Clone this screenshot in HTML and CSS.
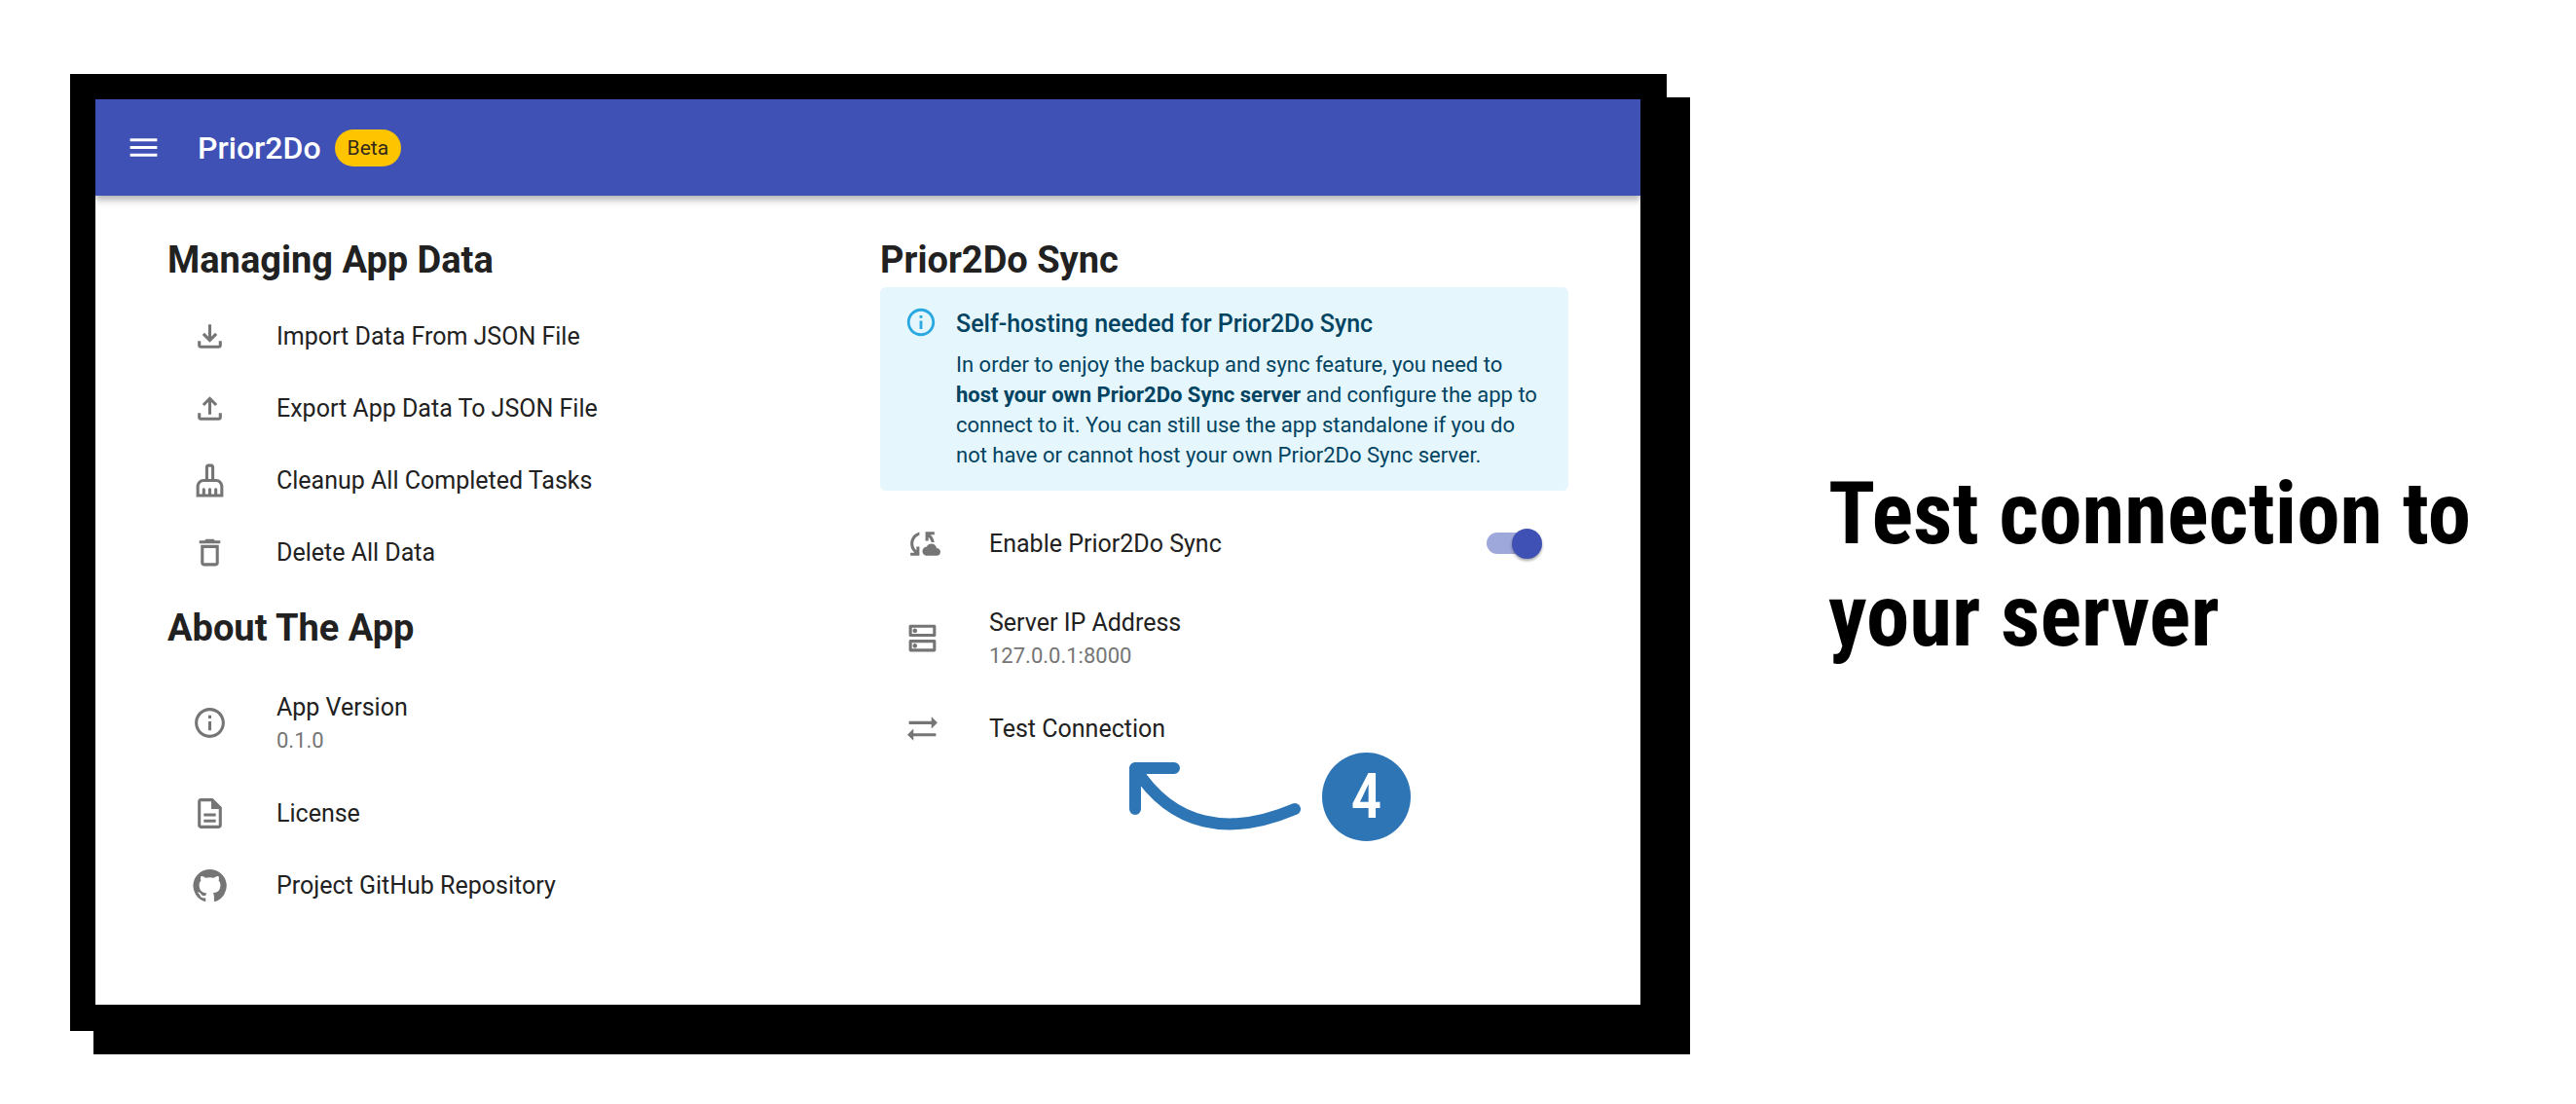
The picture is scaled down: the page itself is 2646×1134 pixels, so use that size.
FILE: index.html
```html
<!DOCTYPE html>
<html lang="en">
<head>
<meta charset="utf-8">
<meta name="viewport" content="width=device-width, initial-scale=1">
<title>Prior2Do – Test connection to your server</title>
<link rel="stylesheet" href="styles.css">
</head>
<body>
<main class="slide">
  <section class="window" aria-label="Prior2Do settings">
    <header class="app-bar">
      <button class="menu-button" type="button" aria-label="Open menu">
        <svg class="icon" viewBox="0 0 24 24" aria-hidden="true"><path d="M3 18h18v-2H3v2zm0-5h18v-2H3v2zm0-7v2h18V6H3z"/></svg>
      </button>
      <h1 class="app-title">Prior2Do</h1>
      <span class="badge">Beta</span>
    </header>
    <div class="panels">
      <div class="panel">
        <h2 class="heading">Managing App Data</h2>
        <ul class="list">
          <li><button class="row" type="button">
            <svg class="icon" viewBox="0 0 24 24" aria-hidden="true"><path d="M18 15v3H6v-3H4v3c0 1.100.9 2 2 2h12c1.100 0 2-.9 2-2v-3h-2zm-1-4l-1.410-1.410L13 12.170V4h-2v8.170L8.410 9.590 7 11l5 5 5-5z"/></svg>
            <span class="label">Import Data From JSON File</span>
          </button></li>
          <li><button class="row" type="button">
            <svg class="icon" viewBox="0 0 24 24" aria-hidden="true"><path d="M18 15v3H6v-3H4v3c0 1.100.9 2 2 2h12c1.100 0 2-.9 2-2v-3h-2zM7 9l1.410 1.410L11 7.830V16h2V7.830l2.590 2.580L17 9l-5-5-5 5z"/></svg>
            <span class="label">Export App Data To JSON File</span>
          </button></li>
          <li><button class="row" type="button">
            <svg class="icon" viewBox="0 0 24 24" aria-hidden="true"><path d="M16 11h-1V3c0-1.100-.9-2-2-2h-2c-1.100 0-2 .9-2 2v8H8c-2.760 0-5 2.240-5 5v7h18v-7c0-2.760-2.240-5-5-5zm-5-8h2v8h-2V3zm8 18h-2v-3c0-.55-.45-1-1-1s-1 .45-1 1v3h-2v-3c0-.55-.45-1-1-1s-1 .45-1 1v3H9v-3c0-.55-.45-1-1-1s-1 .45-1 1v3H5v-5c0-1.650 1.350-3 3-3h8c1.650 0 3 1.350 3 3v5z"/></svg>
            <span class="label">Cleanup All Completed Tasks</span>
          </button></li>
          <li><button class="row" type="button">
            <svg class="icon" viewBox="0 0 24 24" aria-hidden="true"><path d="M6 19c0 1.100.9 2 2 2h8c1.100 0 2-.9 2-2V7H6v12zM8 9h8v10H8V9zm7.500-5l-1-1h-5l-1 1H5v2h14V4z"/></svg>
            <span class="label">Delete All Data</span>
          </button></li>
        </ul>
        <h2 class="heading">About The App</h2>
        <ul class="list">
          <li class="row row-double">
            <svg class="icon" viewBox="0 0 24 24" aria-hidden="true"><path d="M11 7h2v2h-2zm0 4h2v6h-2zm1-9C6.480 2 2 6.480 2 12s4.480 10 10 10 10-4.480 10-10S17.520 2 12 2zm0 18c-4.410 0-8-3.590-8-8s3.590-8 8-8 8 3.590 8 8-3.590 8-8 8z"/></svg>
            <span class="label">App Version<small class="detail">0.1.0</small></span>
          </li>
          <li><a class="row" href="#license">
            <svg class="icon" viewBox="0 0 24 24" aria-hidden="true"><path d="M8 16h8v2H8zm0-4h8v2H8zm6-10H6c-1.100 0-2 .9-2 2v16c0 1.100.89 2 1.990 2H18c1.100 0 2-.9 2-2V8l-6-6zm4 18H6V4h7v5h5v11z"/></svg>
            <span class="label">License</span>
          </a></li>
          <li><a class="row" href="#repository">
            <svg class="icon" viewBox="0 0 24 24" aria-hidden="true"><path d="M12 1.270a11 11 0 00-3.480 21.460c.55.090.73-.28.73-.55v-1.840c-3.030.64-3.670-1.460-3.670-1.460-.55-1.290-1.280-1.650-1.280-1.650-.92-.65.1-.65.1-.65 1.100 0 1.730 1.100 1.730 1.100.92 1.650 2.570 1.200 3.210.92a2 2 0 01.64-1.470c-2.470-.27-5.040-1.190-5.040-5.500 0-1.100.46-2.100 1.200-2.840a3.760 3.760 0 010-2.930s.91-.28 3.110 1.100c1.800-.49 3.700-.49 5.500 0 2.100-1.380 3.020-1.100 3.020-1.100a3.760 3.760 0 01.1 2.930c.83.740 1.200 1.740 1.200 2.940 0 4.210-2.570 5.130-5.040 5.400.45.370.82.920.82 2.020v3.030c0 .27.1.64.73.55A11 11 0 0012 1.270"/></svg>
            <span class="label">Project GitHub Repository</span>
          </a></li>
        </ul>
      </div>
      <div class="panel">
        <h2 class="heading">Prior2Do Sync</h2>
        <div class="notice" role="note">
          <svg class="notice-icon" viewBox="0 0 24 24" aria-hidden="true"><path d="M11 7h2v2h-2zm0 4h2v6h-2zm1-9C6.480 2 2 6.480 2 12s4.480 10 10 10 10-4.480 10-10S17.520 2 12 2zm0 18c-4.410 0-8-3.590-8-8s3.590-8 8-8 8 3.590 8 8-3.590 8-8 8z"/></svg>
          <div>
            <h3 class="notice-title">Self-hosting needed for Prior2Do Sync</h3>
            <p class="notice-text">In order to enjoy the backup and sync feature, you need to <strong>host your own Prior2Do Sync server</strong> and configure the app to connect to it. You can still use the app standalone if you do not have or cannot host your own Prior2Do Sync server.</p>
          </div>
        </div>
        <ul class="list">
          <li class="row row-switch">
            <svg class="icon" viewBox="0 0 24 24" aria-hidden="true"><path d="M21.500 14.980c-.02 0-.03 0-.05.010C21.200 13.300 19.760 12 18 12c-1.400 0-2.600.83-3.160 2.020C13.260 14.100 12 15.400 12 17c0 1.660 1.340 3 3 3l6.500-.02c1.380 0 2.500-1.120 2.500-2.500s-1.120-2.500-2.500-2.500zM10 4.260v2.090C7.670 7.180 6 9.390 6 12c0 1.770.78 3.340 2 4.440V14h2v6H4v-2h2.730C5.060 16.540 4 14.400 4 12c0-3.730 2.550-6.850 6-7.740zM20 6h-2.730c1.430 1.260 2.410 3.010 2.660 5h-2.020c-.23-1.360-.93-2.550-1.910-3.440V10h-2V4h6v2z"/></svg>
            <label class="label" for="sync">Enable Prior2Do Sync</label>
            <input class="switch" id="sync" type="checkbox" role="switch" checked>
          </li>
          <li><button class="row row-double" type="button">
            <svg class="icon" viewBox="0 0 24 24" aria-hidden="true"><path d="M19 15v4H5v-4h14m1-2H4c-.55 0-1 .45-1 1v6c0 .55.45 1 1 1h16c.55 0 1-.45 1-1v-6c0-.55-.45-1-1-1zM7 18.500c-.82 0-1.500-.67-1.500-1.500s.68-1.500 1.500-1.500 1.500.67 1.500 1.500-.67 1.500-1.500 1.500zM19 5v4H5V5h14m1-2H4c-.55 0-1 .45-1 1v6c0 .55.45 1 1 1h16c.55 0 1-.45 1-1V4c0-.55-.45-1-1-1zM7 8.500c-.82 0-1.500-.67-1.500-1.500S6.180 5.500 7 5.500s1.500.68 1.500 1.500S7.830 8.500 7 8.500z"/></svg>
            <span class="label">Server IP Address<small class="detail">127.0.0.1:8000</small></span>
          </button></li>
          <li class="callout-anchor">
            <button class="row" type="button">
              <svg class="icon" viewBox="0 0 24 24" aria-hidden="true"><path d="M22 8l-4-4v3H3v2h15v3l4-4zM2 16l4 4v-3h15v-2H6v-3l-4 4z"/></svg>
              <span class="label">Test Connection</span>
            </button>
            <div class="callout">
              <svg class="callout-arrow" viewBox="0 0 184 76" aria-hidden="true"><path d="M48 10H8v42M8 10C46 70 104 81 172 52"/></svg>
              <span class="callout-number">4</span>
            </div>
          </li>
        </ul>
      </div>
    </div>
  </section>
  <p class="caption">Test connection to your server</p>
</main>
</body>
</html>
```
FILE: styles.css
```css
* {
  box-sizing: border-box;
}

body {
  margin: 0;
  background: #fff;
  color: #212121;
  font-family: Roboto, "Liberation Sans", sans-serif;
  font-size: 25px;
}

h1, h2, h3, p, ul {
  margin: 0;
  padding: 0;
}

ul {
  list-style: none;
}

svg {
  display: block;
  flex: none;
  fill: currentColor;
}

button {
  padding: 0;
  border: 0;
  background: none;
  color: inherit;
  font: inherit;
  text-align: left;
  cursor: pointer;
}

a {
  color: inherit;
  text-decoration: none;
}

.slide {
  display: grid;
  grid-template-columns: minmax(0, 1640fr) minmax(0, 696fr);
  align-items: center;
  column-gap: 166px;
  min-height: 100vh;
  padding: 76px 72px 75px;
}

.window {
  align-self: stretch;
  border: solid #000;
  border-width: 26px 27px 27px 26px;
  background: #fff;
  box-shadow: 24px 24px 0 #000;
}

.app-bar {
  display: flex;
  align-items: center;
  height: 99px;
  padding: 0 31px;
  background: #3f51b5;
  color: #fff;
  box-shadow: 0 3px 6px rgba(0, 0, 0, .2), 0 6px 8px rgba(0, 0, 0, .14);
}

.menu-button {
  margin-right: 37px;
}

.icon {
  width: 37px;
  height: 37px;
}

.app-title {
  font-size: 32px;
  font-weight: 500;
}

.badge {
  margin-left: 14px;
  padding: 0 13px;
  border-radius: 19px;
  background: #ffc400;
  color: #33291b;
  font-size: 21px;
  line-height: 38px;
}

.panels {
  display: grid;
  grid-template-columns: 1fr 1fr;
  column-gap: 25px;
  padding: 38px 74px;
}

.heading {
  font-size: 38px;
  font-weight: 700;
  line-height: 56px;
}

.list {
  padding: 13px 0;
}

.row {
  display: flex;
  align-items: center;
  width: 100%;
  height: 74px;
  padding: 0 27px 0 25px;
}

.row-double {
  height: 112px;
}

.row-switch {
  height: 82px;
}

.row .icon {
  margin-right: 50px;
  color: #757575;
}

.label {
  flex: 1;
  line-height: 37px;
}

.detail {
  display: block;
  color: #757575;
  font-size: 22px;
  line-height: 31px;
}

.notice {
  display: flex;
  gap: 19px;
  padding: 19px 25px 21px;
  border-radius: 6px;
  background: #e5f6fd;
  color: #014361;
}

.notice-icon {
  width: 34px;
  height: 34px;
  color: #29a9e0;
}

.notice-title {
  margin-bottom: 8px;
  font-size: 25px;
  font-weight: 500;
  line-height: 37px;
}

.notice-text {
  font-size: 22px;
  line-height: 31px;
}

.switch {
  position: relative;
  display: flex;
  align-items: center;
  justify-content: flex-end;
  width: 57px;
  height: 31px;
  margin: 0;
  appearance: none;
  cursor: pointer;
}

.switch::before {
  position: absolute;
  top: 4px;
  left: 0;
  width: 53px;
  height: 22px;
  border-radius: 11px;
  background: #9fa8da;
  content: "";
}

.switch::after {
  z-index: 1;
  width: 31px;
  height: 31px;
  border-radius: 50%;
  background: #3f51b5;
  box-shadow: 0 2px 3px rgba(0, 0, 0, .35);
  content: "";
}

.callout-anchor {
  position: relative;
}

.callout {
  position: absolute;
  top: 62px;
  left: 254px;
  display: flex;
  align-items: flex-start;
  gap: 16px;
  pointer-events: none;
}

.callout-arrow {
  width: 184px;
  height: 76px;
  margin-top: 6px;
  fill: none;
  stroke: #2e75b6;
  stroke-width: 12;
  stroke-linecap: round;
  stroke-linejoin: round;
}

.callout-number {
  width: 91px;
  border-radius: 50%;
  background: #2e75b6;
  color: #fff;
  font-family: "Roboto Condensed", "Liberation Sans Narrow", sans-serif;
  font-size: 64px;
  font-weight: 500;
  line-height: 91px;
  text-align: center;
}

.caption {
  padding-top: 24px;
  color: #000;
  font-family: "Roboto Condensed", "Liberation Sans Narrow", sans-serif;
  font-size: 89px;
  font-weight: 700;
  line-height: 105px;
}
```
